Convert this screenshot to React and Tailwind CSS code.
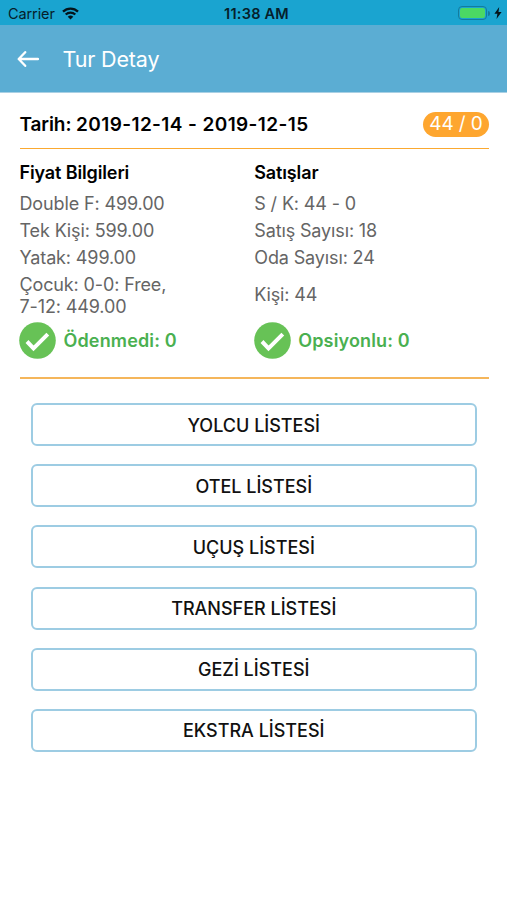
import React from 'react';

const LISTS = [
  'YOLCU LİSTESİ',
  'OTEL LİSTESİ',
  'UÇUŞ LİSTESİ',
  'TRANSFER LİSTESİ',
  'GEZİ LİSTESİ',
  'EKSTRA LİSTESİ',
];

const StatusBar = () => (
  <div className="h-[25px] bg-[#1aa4d0] flex items-center justify-between pl-2 pr-[5px] pt-[3px] text-[#06202a]">
    <div className="flex-1 flex items-center gap-[7px]">
      <span className="text-[14.5px] leading-none tracking-[-0.1px]">Carrier</span>
      <svg width="17" height="13" viewBox="0 0 17 13" className="-mt-[2px]">
        <path d="M1 4.6a10.8 10.8 0 0 1 15 0" fill="none" stroke="#04141b" strokeWidth="2.3" />
        <path d="M3.7 7.5a6.9 6.9 0 0 1 9.6 0" fill="none" stroke="#04141b" strokeWidth="2.2" />
        <path d="M8.5 12.6 5.7 9.8a4 4 0 0 1 5.6 0z" fill="#04141b" />
      </svg>
    </div>
    <span className="ml-[3px] text-[14.5px] leading-none font-semibold tracking-[0.25px]">11:38 AM</span>
    <div className="flex-1 flex items-center justify-end -mt-[2px]">
      <div className="w-[29px] h-[14px] rounded-[4px] border border-[#137c9e] p-[1px]">
        <div className="w-full h-full rounded-[2px] bg-[#4bd964]" />
      </div>
      <div className="w-[2px] h-[5px] ml-[1px] rounded-r-full bg-[#137c9e]" />
      <svg width="8" height="12" viewBox="0 0 8 12" className="ml-[4px]">
        <path d="M5.2 0 0.4 6.8h3L2.5 12 7.6 5H4.5z" fill="#04141b" />
      </svg>
    </div>
  </div>
);

const Header = () => (
  <div className="h-[68px] bg-[#5badd3] border-b border-[#a9d0e4] flex items-center text-white">
    <svg width="22" height="16" viewBox="0 0 22 16" className="ml-[17px]">
      <path
        d="M8.2 1.2 1.7 8l6.5 6.8M2 8h19"
        fill="none"
        stroke="#fff"
        strokeWidth="2.3"
        strokeLinecap="round"
        strokeLinejoin="round"
      />
    </svg>
    <h1 className="ml-[23.5px] mt-[2px] text-[21.5px] leading-none tracking-[-0.15px]">Tur Detay</h1>
  </div>
);

const Check = ({ label }) => (
  <div className="-ml-[0.5px] flex items-center gap-[7.5px] h-[37px]">
    <svg width="37" height="37" viewBox="0 0 37 37">
      <circle cx="18.5" cy="18.5" r="18.3" fill="#67c256" />
      <path d="m8 19.5 6.5 6.8L28.8 12.2" fill="none" stroke="#fff" strokeWidth="4" />
    </svg>
    <span className="text-[18px] font-semibold tracking-[0.15px] text-[#4ab050]">{label}</span>
  </div>
);

const App = () => {
  return (
    <div className="h-[900px] w-full bg-white overflow-hidden font-['Inter',sans-serif]">
      <StatusBar />
      <Header />

      <div className="ml-[19.5px] mr-[18px]">
        <div className="flex items-center justify-between h-[56px] pt-[7px] border-b-[1.5px] border-[#fba930]">
          <span className="mt-[2px] text-[19px] font-semibold tracking-[0.4px] text-black">
            <span className="tracking-[-0.1px]">Tarih: </span>
            2019-12-14 - 2019-12-15
          </span>
          <span className="w-[66px] h-[25px] pt-px rounded-full bg-[#fea62f] text-white text-[19px] tracking-[-0.1px] flex items-center justify-center">
            44 / 0
          </span>
        </div>

        <div className="grid grid-cols-2 pt-[9px] pb-[18px] border-b-2 border-[#f5b65b] text-[18px] leading-[27px] tracking-[-0.13px] text-[#656565]">
          <div>
            <h2 className="h-[32px] leading-[29px] font-semibold text-black">Fiyat Bilgileri</h2>
            <p>Double F: 499.00</p>
            <p>Tek Kişi: 599.00</p>
            <p>Yatak: 499.00</p>
            <p className="h-[51px] pt-[3px] leading-[22px]">
              Çocuk: 0-0: Free,
              <br />
              7-12: 449.00
            </p>
            <Check label="Ödenmedi: 0" />
          </div>
          <div>
            <h2 className="h-[32px] leading-[29px] font-semibold text-black">Satışlar</h2>
            <p>S / K: 44 - 0</p>
            <p>Satış Sayısı: 18</p>
            <p>Oda Sayısı: 24</p>
            <p className="h-[51px] leading-[48px]">Kişi: 44</p>
            <Check label="Opsiyonlu: 0" />
          </div>
        </div>

        <div className="ml-[11.5px] mr-[12.5px] mt-[24px] flex flex-col gap-[18.2px]">
          {LISTS.map((name) => (
            <button
              key={name}
              className="h-[43px] pt-px rounded-[6px] border-2 border-[#9dcce3] text-[18px] font-medium text-[#111]"
            >
              {name}
            </button>
          ))}
        </div>
      </div>
    </div>
  );
};

export default App;
